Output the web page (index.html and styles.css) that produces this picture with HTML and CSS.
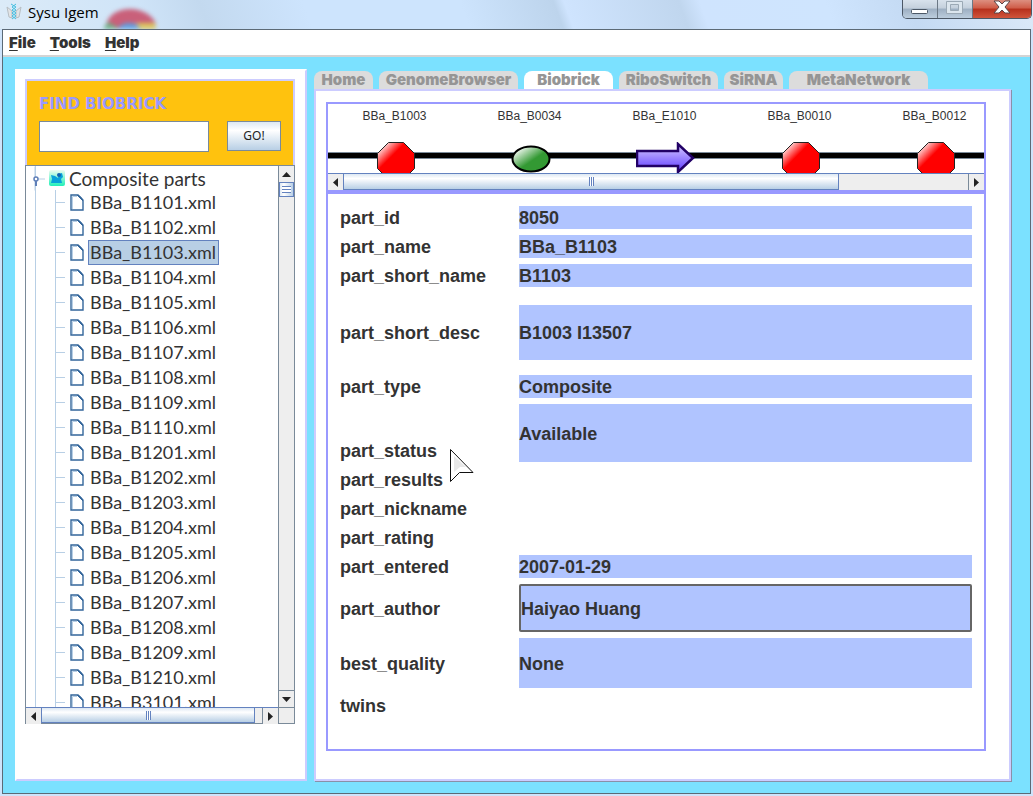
FILE: index.html
```html
<!DOCTYPE html>
<html lang="en">
<head>
<meta charset="utf-8">
<title>Sysu Igem</title>
<link rel="stylesheet" href="styles.css">
</head>
<body>
<svg class="defs" width="0" height="0" aria-hidden="true">
  <defs>
    <linearGradient id="red" x1="0" y1="0" x2="1" y2="1"><stop offset=".08" stop-color="#fff"/><stop offset=".38" stop-color="#f00"/></linearGradient>
    <linearGradient id="green" x1="0" y1="0" x2="1" y2="1"><stop offset=".1" stop-color="#fff"/><stop offset=".55" stop-color="#393"/></linearGradient>
    <linearGradient id="violet" x1="0" y1="0" x2="0" y2="1"><stop offset="0" stop-color="#d8ccff"/><stop offset=".9" stop-color="#6a48ff"/></linearGradient>
    <linearGradient id="teal" x1="0" y1="0" x2="0" y2="1"><stop offset="0" stop-color="#eefcf0"/><stop offset="1" stop-color="#20f0b8"/></linearGradient>
    <symbol id="file" viewBox="0 0 14 17"><path d="M1 1h7l5 5v10H1z" fill="#fff" stroke="#33669b" stroke-width="1.4"/><path d="M2.5 15V2.5H7" fill="none" stroke="#b8cfe5"/><path d="M7 1l6 6M9 1.500l3 3" stroke="#33669b"/></symbol>
    <symbol id="stop" viewBox="0 0 38 38"><path d="M11.500.5h15l11 11v15l-11 11h-15l-11-11v-15z" fill="url(#red)" stroke="#222"/></symbol>
  </defs>
</svg>
<div class="window">
  <header class="titlebar">
    <svg class="backdrop" width="56" height="29" viewBox="0 0 56 29" aria-hidden="true"><path d="M2 29C4 15 14 9 27 9s23 7 26 15H26L13 29z" fill="#c9607a"/><path d="M0 29l5-7 12 7z" fill="#6fb088"/><path d="M34 23h18l1 6H34z" fill="#dbc65e"/><ellipse cx="26" cy="30" rx="11" ry="7" fill="#5f9fe0"/></svg>
    <svg width="16" height="18" viewBox="0 0 16 18" aria-hidden="true"><path d="M1 4l5 4v7l-3-1zM15 4l-5 4v7l3-1z" fill="#e2e4e6" stroke="#b8bec3"/><path d="M5 1l5 3-4 3 4 3-4 3 4 3M10 1L6 4l4 3-4 3 4 3-4 3" fill="none" stroke="#43bfe0"/></svg>
    <span class="title">Sysu Igem</span>
    <div class="controls">
      <button class="ctl" aria-label="Minimize"><svg width="18" height="20" viewBox="0 0 18 20"><rect x=".5" y="9.500" width="16" height="4" rx="1" fill="#fff" stroke="#4c5866"/></svg></button>
      <button class="ctl" aria-label="Maximize"><svg width="18" height="20" viewBox="0 0 18 20"><path d="M.5 1.500h16v12H.5zM4.500 4.500v6h8v-6z" fill="#dce6ee" fill-rule="evenodd" stroke="#9ba9b5"/></svg></button>
      <button class="ctl close" aria-label="Close"><svg width="18" height="20" viewBox="0 0 18 20"><path d="M1 1h5l3 3 3-3h5l-5 6 5 6h-5l-3-3-3 3H1l5-6z" fill="#fff" stroke="#5b4648"/></svg></button>
    </div>
  </header>
  <div class="frame">
    <nav class="menu">
      <button><u>F</u>ile</button><button><u>T</u>ools</button><button><u>H</u>elp</button>
    </nav>
    <main class="content">
      <aside class="side">
        <form class="find">
          <label for="q">FIND BIOBRICK</label>
          <div class="find-row"><input id="q" type="text"><button type="button" class="go">GO!</button></div>
        </form>
        <div class="browser">
          <div class="tree">
            <div class="root"><svg width="30" height="25" viewBox="0 0 30 25" aria-hidden="true"><path d="M9 .5v24M12 13h7" stroke="#b8cfe5"/><circle cx="10" cy="13" r="2" fill="#fff" stroke="#5f7fb8" stroke-width="1.500"/><path d="M10 15v5" stroke="#5f7fb8" stroke-width="2"/></svg><svg class="folder" width="16" height="16" viewBox="0 0 16 16" aria-hidden="true"><rect width="16" height="16" rx="2" fill="url(#teal)"/><path d="M2 5l4 1 3 2 1-4 3-1 1 4-2 2 1 4H2l1-4z" fill="#08a2da"/><circle cx="10" cy="5" r="2" fill="#1264b4"/></svg><span>Composite parts</span></div>
            <ul>
              <li><svg><use href="#file"/></svg><span>BBa_B1101.xml</span></li>
              <li><svg><use href="#file"/></svg><span>BBa_B1102.xml</span></li>
              <li class="selected"><svg><use href="#file"/></svg><span>BBa_B1103.xml</span></li>
              <li><svg><use href="#file"/></svg><span>BBa_B1104.xml</span></li>
              <li><svg><use href="#file"/></svg><span>BBa_B1105.xml</span></li>
              <li><svg><use href="#file"/></svg><span>BBa_B1106.xml</span></li>
              <li><svg><use href="#file"/></svg><span>BBa_B1107.xml</span></li>
              <li><svg><use href="#file"/></svg><span>BBa_B1108.xml</span></li>
              <li><svg><use href="#file"/></svg><span>BBa_B1109.xml</span></li>
              <li><svg><use href="#file"/></svg><span>BBa_B1110.xml</span></li>
              <li><svg><use href="#file"/></svg><span>BBa_B1201.xml</span></li>
              <li><svg><use href="#file"/></svg><span>BBa_B1202.xml</span></li>
              <li><svg><use href="#file"/></svg><span>BBa_B1203.xml</span></li>
              <li><svg><use href="#file"/></svg><span>BBa_B1204.xml</span></li>
              <li><svg><use href="#file"/></svg><span>BBa_B1205.xml</span></li>
              <li><svg><use href="#file"/></svg><span>BBa_B1206.xml</span></li>
              <li><svg><use href="#file"/></svg><span>BBa_B1207.xml</span></li>
              <li><svg><use href="#file"/></svg><span>BBa_B1208.xml</span></li>
              <li><svg><use href="#file"/></svg><span>BBa_B1209.xml</span></li>
              <li><svg><use href="#file"/></svg><span>BBa_B1210.xml</span></li>
              <li><svg><use href="#file"/></svg><span>BBa_B3101.xml</span></li>
            </ul>
          </div>
          <div class="vbar"><button class="arrow" aria-label="Scroll up"><svg width="9" height="5"><path d="M0 5l4.500-5L9 5z"/></svg></button><div class="thumb"></div><div class="track"></div><button class="arrow" aria-label="Scroll down"><svg width="9" height="5"><path d="M0 0l4.500 5L9 0z"/></svg></button></div>
          <div class="hbar"><button class="arrow" aria-label="Scroll left"><svg width="5" height="9"><path d="M5 0L0 4.500 5 9z"/></svg></button><div class="thumb"></div><div class="track"></div><button class="arrow" aria-label="Scroll right"><svg width="5" height="9"><path d="M0 0l5 4.500L0 9z"/></svg></button></div>
          <div class="corner"></div>
        </div>
      </aside>
      <section class="work">
        <div class="tabs">
          <button class="t-home">Home</button><button class="t-wide">GenomeBrowser</button><button class="t-mid active">Biobrick</button><button class="t-ribo">RiboSwitch</button><button class="t-home">SiRNA</button><button class="t-wide">MetaNetwork</button>
        </div>
        <div class="page">
          <div class="strip">
            <div class="parts">
              <div class="part"><span>BBa_B1003</span><svg width="38" height="38"><use href="#stop"/></svg></div>
              <div class="part"><span>BBa_B0034</span><svg width="40" height="32" viewBox="0 0 40 32"><ellipse cx="20" cy="17" rx="18.500" ry="12.500" fill="url(#green)" stroke="#000" stroke-width="2"/></svg></div>
              <div class="part"><span>BBa_E1010</span><svg width="60" height="32" viewBox="0 0 60 32"><path d="M1 9h41V2l15 14-15 14v-6H1z" fill="url(#violet)" stroke="#220066" stroke-width="2.500"/></svg></div>
              <div class="part"><span>BBa_B0010</span><svg width="38" height="38"><use href="#stop"/></svg></div>
              <div class="part"><span>BBa_B0012</span><svg width="38" height="38"><use href="#stop"/></svg></div>
            </div>
            <div class="hbar"><button class="arrow" aria-label="Scroll left"><svg width="5" height="9"><path d="M5 0L0 4.500 5 9z"/></svg></button><div class="thumb"></div><div class="track"></div><button class="arrow" aria-label="Scroll right"><svg width="5" height="9"><path d="M0 0l5 4.500L0 9z"/></svg></button></div>
          </div>
          <form class="details">
            <label for="f1">part_id</label><input id="f1" readonly value="8050">
            <label for="f2">part_name</label><input id="f2" readonly value="BBa_B1103">
            <label for="f3">part_short_name</label><input id="f3" readonly value="B1103">
            <label class="desc" for="f4">part_short_desc</label><input class="desc" id="f4" readonly value="B1003 I13507">
            <label for="f5">part_type</label><input id="f5" readonly value="Composite">
            <label class="low" for="f6">part_status</label><input class="status" id="f6" readonly value="Available">
            <label for="f7">part_results</label><input class="empty" id="f7" readonly>
            <label for="f8">part_nickname</label><input class="empty" id="f8" readonly>
            <label for="f9">part_rating</label><input class="empty" id="f9" readonly>
            <label for="f10">part_entered</label><input id="f10" readonly value="2007-01-29">
            <label for="f11">part_author</label><input class="author" id="f11" readonly value="Haiyao Huang">
            <label for="f12">best_quality</label><input class="quality" id="f12" readonly value="None">
            <label for="f13">twins</label><input class="empty" id="f13" readonly>
          </form>
        </div>
      </section>
    </main>
  </div>
</div>
<svg class="cursor" width="26" height="36" viewBox="0 0 26 36" aria-hidden="true"><path d="M1.500 1.500v32l9-9H24z" fill="#fff" stroke="#111"/><path d="M5 8v16l6-5h6z" fill="#e8e8e8"/></svg>
</body>
</html>
```
FILE: styles.css
```css
* { box-sizing: border-box; }
body { margin: 0; font-family: "Liberation Sans", Arial, sans-serif; color: #333; }
button, input { font: inherit; color: inherit; margin: 0; padding: 0; border: 0; outline: 0; }
button { cursor: pointer; background: none; }
svg { display: block; flex: none; }
.defs { position: absolute; }

.window { height: 100vh; min-height: 640px; display: flex; flex-direction: column; padding: 0 2px 2px; background: #cfe4fb; }
.titlebar {
  height: 29px; flex: none; position: relative; overflow: hidden; display: flex; align-items: flex-start; gap: 6px;
  padding: 3px 0 0 4px; margin: 0 -2px;
  background: linear-gradient(70deg, #dcebf8 0, #cfe4f8 14%, #c3d9ef 20%, #cde4fd 30%, #cde4fd 45%, #bdd4ec 54%, #cfe4fe 55%, #c0d6ee 66%, #cfe4fe 68%, #cfe5fe 80%, #c4daf3 88%, #dbe9f8 100%);
}
.titlebar > svg { margin-left: 2px; }
.titlebar > .backdrop { position: absolute; left: 101px; top: 0; filter: blur(2px); }
.title { font: 15px/18px "Open Sans", "Noto Sans", sans-serif; color: #000; }
.controls { margin: -3px 1px 0 auto; height: 19px; display: flex; border: 1px solid #4c5866; border-top: 0; border-radius: 0 0 5px 5px; overflow: hidden; }
.ctl { width: 35px; display: flex; justify-content: center; background: linear-gradient(#d8e2ec, #c4d0dc 45%, #9dafc2 50%, #bccddd); border-right: 1px solid #6b7885; }
.close { width: 58px; border: 0; background: linear-gradient(#dd8f80, #cf5c48 45%, #b6301c 50%, #d0553c); }

.frame { flex: 1; min-height: 0; display: flex; flex-direction: column; border: 1px solid #5c6a76; background: #7be1ff; }
.menu { height: 27px; flex: none; display: flex; gap: 14px; padding: 1px 6px; background: #fff; border-bottom: 2px solid #d4d4d4; }
.menu button { font: 900 15px/23px Inter, "Liberation Sans", sans-serif; }
.menu u { text-underline-offset: 2px; text-decoration-thickness: 1px; }
.content { flex: 1; min-height: 0; display: flex; gap: 7px; padding: 12px 19px 12px 12px; }

.side { width: 292px; flex: none; display: flex; flex-direction: column; padding: 8px 10px 55px 8px; background: #fff; border: 2px solid #ccf; border-top-color: #fff; border-left-color: #fff; }
.find { flex: none; height: 86px; padding: 14px 12px 0 12px; background: #ffc20e; border: 2px solid #ccf; border-bottom: 0; }
.find label { display: block; font: bold 15px/19px "DejaVu Sans", sans-serif; color: #99f; }
.find-row { display: flex; justify-content: space-between; margin-top: 7px; }
.find input { width: 170px; height: 31px; padding: 0 4px; background: #fff; border: 1px solid #7a8a99; }
.go { width: 54px; height: 30px; font: 12px/28px "Noto Sans", sans-serif; color: #222; background: linear-gradient(#dde8f3, #fff 30%, #b8cfe5); border: 1px solid #7a8a99; }

.browser { flex: 1; min-height: 0; display: grid; grid-template: minmax(0, 1fr) 16px / minmax(0, 1fr) 16px; border: 1px solid #7a8a99; }
.tree { overflow: hidden; font: 18px/25px Lato, "Noto Sans", sans-serif; background: linear-gradient(#b8cfe5, #b8cfe5) 9px 0 / 1px 100% no-repeat #fff; }
.root { display: flex; align-items: center; height: 24px; }
.root .folder { margin: 0 4px 0 -7px; }
.root > svg:first-child { width: 30px; }
.root span { font-size: 19px; }
.tree ul { list-style: none; margin: 0 0 0 29px; padding: 0; border-left: 1px solid #b8cfe5; }
.tree li { display: flex; align-items: center; gap: 5px; height: 25px; }
.tree li::before { content: ""; width: 9px; height: 1px; background: #b8cfe5; }
.tree li svg { width: 14px; height: 17px; }
.tree li span { height: 25px; line-height: 23px; padding: 0 2px 0 1px; border: 1px solid transparent; }
.tree li svg + span { margin-left: -1px; }
.tree .selected span { background: #b8cfe5; border-color: #6382bf; }

.vbar, .hbar { display: flex; background: #eee; }
.vbar { flex-direction: column; border-left: 1px solid #7a8a99; }
.hbar { height: 17px; border-top: 1px solid #6382bf; }
.browser .hbar { height: 16px; }
.arrow { width: 15px; height: 16px; flex: none; display: flex; align-items: center; justify-content: center; background: #eee; }
.arrow path { fill: #222; }
.track { flex: 1; border: 0 solid #7a8a99; }
.vbar .track { border-bottom-width: 1px; }
.hbar .track { border-right-width: 1px; }
.vbar .thumb { height: 15px; flex: none; border: 1px solid #6382bf; background: repeating-linear-gradient(#6382bf 0 1px, #fff 1px 3px) center / 9px 7px no-repeat, linear-gradient(90deg, #dde8f3, #fff 30%, #b8cfe5); }
.hbar .thumb { flex: none; border: 1px solid #6382bf; border-top: 0; background: repeating-linear-gradient(90deg, #6382bf 0 1px, #fff 1px 2px) center / 5px 9px no-repeat, linear-gradient(#dde8f3, #fff 30%, #b8cfe5); }
.browser .hbar .thumb { width: 85%; }
.strip .hbar .thumb { width: 496px; max-width: 76%; }
.corner { background: #eee; border: 1px solid #7a8a99; border-width: 1px 0 0 1px; }

.work { flex: 1; min-width: 0; display: flex; flex-direction: column; padding-top: 2px; }
.tabs { display: flex; gap: 6px; height: 18px; flex: none; }
.tabs button { border-radius: 8px 8px 0 0; background: #dcdcdc; color: #959595; font: 900 15px/18px Inter, "Liberation Sans", sans-serif; }
.tabs .active { background: #fff; }
.t-home { width: 59px; }
.t-wide { width: 139px; }
.t-mid { width: 89px; }
.t-ribo { width: 99px; }
.page { flex: 1; min-height: 0; display: flex; flex-direction: column; padding: 11px 23px 28px 10px; background: #fff; border: 2px solid #ccf; box-shadow: 1px 1px 0 #8a90a8; }
.strip { flex: none; border: 2px solid #99f; }
.parts { display: flex; height: 69px; overflow: hidden; background: linear-gradient(#000, #000) 0 49px / 100% 5px no-repeat, linear-gradient(#7a8a99, #7a8a99) 0 48px / 100% 7px no-repeat; }
.part { width: 135px; flex: none; display: flex; flex-direction: column; align-items: center; gap: 14px; padding: 4px 2px 0 0; font-size: 12px; line-height: 16px; }
.part svg { margin: 4px 0 0 2px; }
.details {
  flex: 1; display: grid; grid-template-columns: 179px minmax(0, 1fr); grid-auto-rows: max-content; row-gap: 6px; align-items: center;
  padding: 12px; border: 2px solid #99f; font-weight: bold; font-size: 18px; line-height: 21px;
}
.details label { padding-top: 2px; }
.details input { width: 100%; height: 23px; padding-top: 2px; background: #b0c4ff; }
.details .empty { background: none; }
.details .desc { margin: 12px 0 9px; }
.details input.desc { height: 55px; }
.details .low { align-self: end; }
.details .status { height: 58px; }
.details .author { height: 48px; border: 2px solid #666; border-radius: 2px; }
.details .quality { height: 50px; }
.cursor { position: absolute; left: 449px; top: 448px; }
```
